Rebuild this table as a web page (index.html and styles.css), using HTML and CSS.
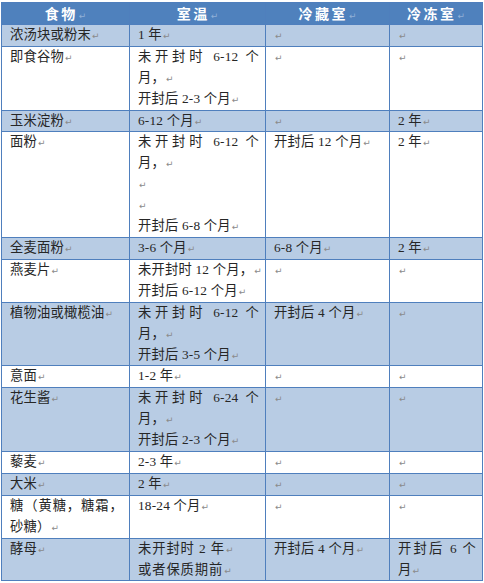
FILE: index.html
```html
<!DOCTYPE html>
<html lang="zh-CN">
<head>
<meta charset="utf-8">
<title>食物保存期限</title>
<link rel="stylesheet" href="styles.css">
</head>
<body>
<table class="tbl">
  <colgroup>
    <col class="c1"><col class="c2"><col class="c3"><col class="c4">
  </colgroup>
  <thead>
    <tr class="hd">
      <th>食物<i class="r">↵</i></th>
      <th>室温<i class="r">↵</i></th>
      <th>冷藏室<i class="r">↵</i></th>
      <th>冷冻室<i class="r">↵</i></th>
    </tr>
  </thead>
  <tbody>
    <tr class="b">
      <td>浓汤块或粉末<i class="r">↵</i></td>
      <td>1 年<i class="r">↵</i></td>
      <td><i class="r">↵</i></td>
      <td><i class="r">↵</i></td>
    </tr>
    <tr>
      <td>即食谷物<i class="r">↵</i></td>
      <td><div class="j">未开封时 6-12 个</div><div>月，<i class="r">↵</i></div><div>开封后 2-3 个月<i class="r">↵</i></div></td>
      <td><i class="r">↵</i></td>
      <td><i class="r">↵</i></td>
    </tr>
    <tr class="b">
      <td>玉米淀粉<i class="r">↵</i></td>
      <td>6-12 个月<i class="r">↵</i></td>
      <td><i class="r">↵</i></td>
      <td>2 年<i class="r">↵</i></td>
    </tr>
    <tr>
      <td>面粉<i class="r">↵</i></td>
      <td><div class="j">未开封时 6-12 个</div><div>月，<i class="r">↵</i></div><div><i class="r">↵</i></div><div><i class="r">↵</i></div><div>开封后 6-8 个月<i class="r">↵</i></div></td>
      <td>开封后 12 个月<i class="r">↵</i></td>
      <td>2 年<i class="r">↵</i></td>
    </tr>
    <tr class="b">
      <td>全麦面粉<i class="r">↵</i></td>
      <td>3-6 个月<i class="r">↵</i></td>
      <td>6-8 个月<i class="r">↵</i></td>
      <td>2 年<i class="r">↵</i></td>
    </tr>
    <tr>
      <td>燕麦片<i class="r">↵</i></td>
      <td><div>未开封时 12 个月，<i class="r">↵</i></div><div>开封后 6-12 个月<i class="r">↵</i></div></td>
      <td><i class="r">↵</i></td>
      <td><i class="r">↵</i></td>
    </tr>
    <tr class="b">
      <td>植物油或橄榄油<i class="r">↵</i></td>
      <td><div class="j">未开封时 6-12 个</div><div>月，<i class="r">↵</i></div><div>开封后 3-5 个月<i class="r">↵</i></div></td>
      <td>开封后 4 个月<i class="r">↵</i></td>
      <td><i class="r">↵</i></td>
    </tr>
    <tr>
      <td>意面<i class="r">↵</i></td>
      <td>1-2 年<i class="r">↵</i></td>
      <td><i class="r">↵</i></td>
      <td><i class="r">↵</i></td>
    </tr>
    <tr class="b">
      <td>花生酱<i class="r">↵</i></td>
      <td><div class="j">未开封时 6-24 个</div><div>月，<i class="r">↵</i></div><div>开封后 2-3 个月<i class="r">↵</i></div></td>
      <td><i class="r">↵</i></td>
      <td><i class="r">↵</i></td>
    </tr>
    <tr>
      <td>藜麦<i class="r">↵</i></td>
      <td>2-3 年<i class="r">↵</i></td>
      <td><i class="r">↵</i></td>
      <td><i class="r">↵</i></td>
    </tr>
    <tr class="b">
      <td>大米<i class="r">↵</i></td>
      <td>2 年<i class="r">↵</i></td>
      <td><i class="r">↵</i></td>
      <td><i class="r">↵</i></td>
    </tr>
    <tr>
      <td><div class="j">糖（黄糖，糖霜，</div><div>砂糖）<i class="r">↵</i></div></td>
      <td>18-24 个月<i class="r">↵</i></td>
      <td><i class="r">↵</i></td>
      <td><i class="r">↵</i></td>
    </tr>
    <tr class="b">
      <td>酵母<i class="r">↵</i></td>
      <td><div class="sp">未开封时 2 年<i class="r">↵</i></div><div class="sp">或者保质期前<i class="r">↵</i></div></td>
      <td>开封后 4 个月<i class="r">↵</i></td>
      <td><div class="j">开封后 6 个</div><div>月<i class="r">↵</i></div></td>
    </tr>
  </tbody>
</table>
</body>
</html>
```
FILE: styles.css
```css
html, body {
  margin: 0;
  padding: 0;
  background: #ffffff;
}
body {
  padding: 2px 0 0 1px;
}
.tbl {
  width: 481px;
  table-layout: fixed;
  border-collapse: collapse;
  font-family: "Liberation Serif", "Noto Sans CJK SC", serif;
  font-size: 13.3px;
  color: #262626;
  letter-spacing: 0.2px;
}
.c1 { width: 128px; }
.c2 { width: 136px; }
.c3 { width: 124px; }
.c4 { width: 93px; }
.tbl th,
.tbl td {
  border: 1px solid #4f7fbd;
  padding: 0 6px 0 8px;
  line-height: 20.9px;
  vertical-align: top;
  text-align: left;
  overflow: hidden;
  white-space: nowrap;
}
.hd th {
  background: #4f81bd;
  color: #ffffff;
  font-family: "Noto Sans CJK SC", sans-serif;
  font-weight: 700;
  font-size: 14px;
  letter-spacing: 2.5px;
  text-align: center;
  padding: 0;
}
.b td {
  background: #b8cce4;
}
.j {
  text-align: justify;
  text-align-last: justify;
  text-justify: inter-character;
}
.sp {
  letter-spacing: 0.9px;
}
.r {
  font-style: normal;
  font-family: "DejaVu Sans", sans-serif;
  font-size: 9px;
  line-height: 0;
  color: #8a8a8a;
  letter-spacing: 0;
  margin-left: 1px;
}
.hd .r {
  color: #8fb0d8;
  font-weight: 400;
}
```
